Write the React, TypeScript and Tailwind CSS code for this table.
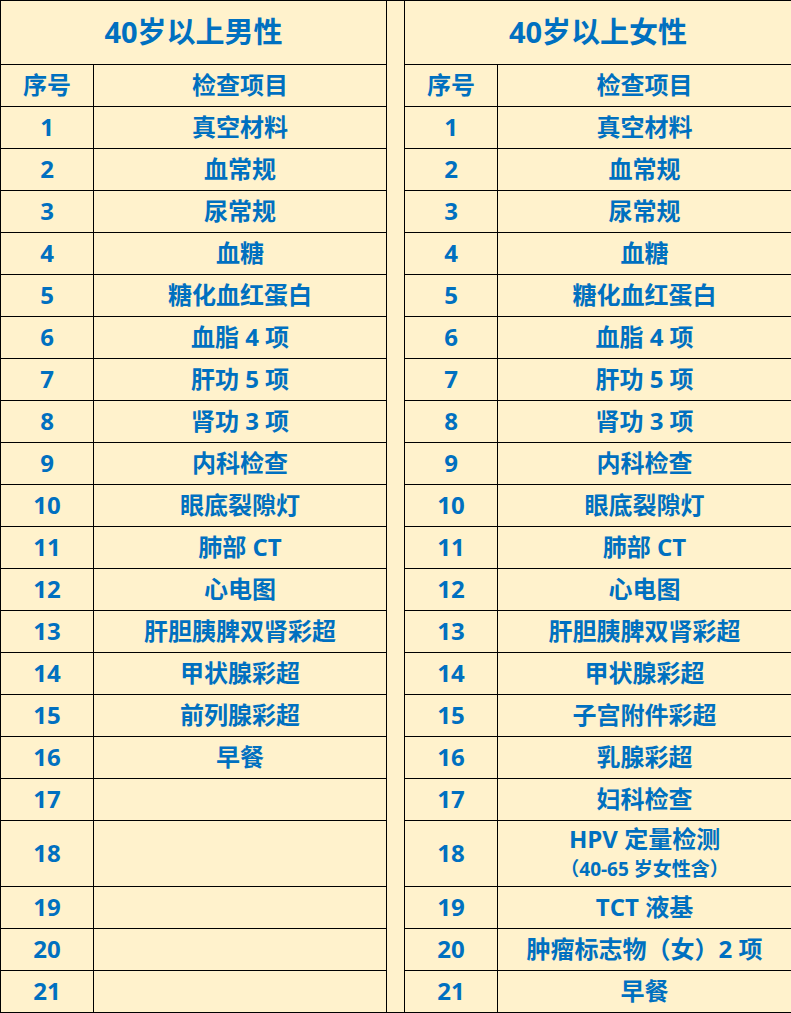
import React from 'react'

type Row = { no: number; male: string; female: React.ReactNode; tall?: boolean }

const rows: Row[] = [
    { no: 1, male: '真空材料', female: '真空材料' },
    { no: 2, male: '血常规', female: '血常规' },
    { no: 3, male: '尿常规', female: '尿常规' },
    { no: 4, male: '血糖', female: '血糖' },
    { no: 5, male: '糖化血红蛋白', female: '糖化血红蛋白' },
    { no: 6, male: '血脂 4 项', female: '血脂 4 项' },
    { no: 7, male: '肝功 5 项', female: '肝功 5 项' },
    { no: 8, male: '肾功 3 项', female: '肾功 3 项' },
    { no: 9, male: '内科检查', female: '内科检查' },
    { no: 10, male: '眼底裂隙灯', female: '眼底裂隙灯' },
    { no: 11, male: '肺部 CT', female: '肺部 CT' },
    { no: 12, male: '心电图', female: '心电图' },
    { no: 13, male: '肝胆胰脾双肾彩超', female: '肝胆胰脾双肾彩超' },
    { no: 14, male: '甲状腺彩超', female: '甲状腺彩超' },
    { no: 15, male: '前列腺彩超', female: '子宫附件彩超' },
    { no: 16, male: '早餐', female: '乳腺彩超' },
    { no: 17, male: '', female: '妇科检查' },
    {
        no: 18,
        male: '',
        tall: true,
        female: (
            <div className="flex flex-col items-center leading-none">
                <span className="text-[24px]">HPV 定量检测</span>
                <span className="mt-[9px] text-[19px]">（40-65 岁女性含）</span>
            </div>
        ),
    },
    { no: 19, male: '', female: 'TCT 液基' },
    { no: 20, male: '', female: '肿瘤标志物（女）2 项' },
    { no: 21, male: '', female: '早餐' },
]

const cell = 'border border-black text-center align-middle p-0 pb-[2px]'

const App: React.FC = () => {
    return (
        <div
            className="w-[791px] bg-[#fff2cc] text-[#0070c0] font-bold"
            style={{ fontFamily: '"Open Sans", "Noto Sans CJK SC", sans-serif' }}
        >
            <table className="w-[791px] table-fixed border-collapse">
                <colgroup>
                    <col className="w-[93px]" />
                    <col className="w-[293px]" />
                    <col className="w-[18px]" />
                    <col className="w-[93px]" />
                    <col className="w-[294px]" />
                </colgroup>
                <tbody>
                    <tr className="h-[64px] leading-none">
                        <td colSpan={2} className={`${cell} text-[29px]`}>40岁以上男性</td>
                        <td rowSpan={23} className={cell}></td>
                        <td colSpan={2} className={`${cell} text-[29px]`}>40岁以上女性</td>
                    </tr>
                    <tr className="h-[42px] text-[24px] leading-none">
                        <td className={cell}>序号</td>
                        <td className={cell}>检查项目</td>
                        <td className={cell}>序号</td>
                        <td className={cell}>检查项目</td>
                    </tr>
                    {rows.map((row) => (
                        <tr key={row.no} className={`${row.tall ? 'h-[66px]' : 'h-[42px]'} text-[24px] leading-none`}>
                            <td className={cell}>{row.no}</td>
                            <td className={cell}>{row.male}</td>
                            <td className={cell}>{row.no}</td>
                            <td className={cell}>{row.female}</td>
                        </tr>
                    ))}
                </tbody>
            </table>
        </div>
    )
}

export default App
